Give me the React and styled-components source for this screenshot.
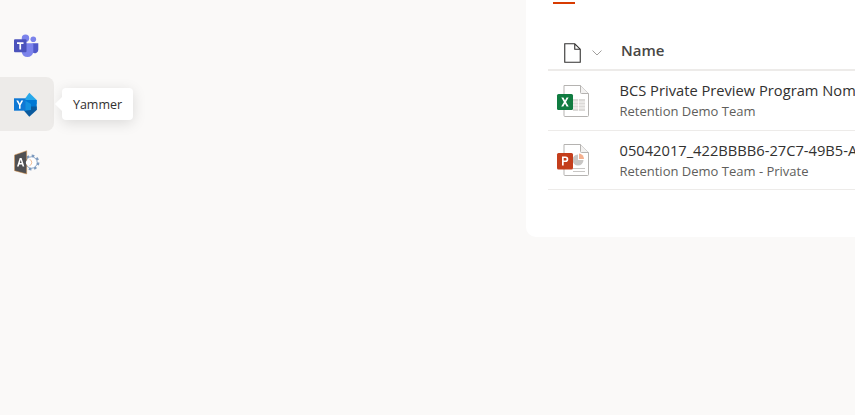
import React from "react";
import styled, { createGlobalStyle } from "styled-components";

const Global = createGlobalStyle`
  html, body { margin: 0; padding: 0; height: 100%; overflow: hidden; background: #faf9f8; }
  #root { height: 100%; }
  * { box-sizing: border-box; }
`;
const Page = styled.div`
  display: flex; width: 855px; height: 415px; overflow: hidden; background: #faf9f8;
  font-family: "Open Sans", "Noto Sans", sans-serif; color: #323130;
`;
const Rail = styled.nav`
  width: 54px; flex: none; display: flex; flex-direction: column; gap: 4px; padding-top: 19px;
`;
const Tile = styled.div`
  position: relative; width: 54px; height: 54px; display: flex; align-items: center; justify-content: center;
  border-radius: ${p => (p.$active ? "0 8px 8px 0" : "0")};
  background: ${p => (p.$active ? "#edebe9" : "transparent")};
`;
const Tooltip = styled.div`
  position: absolute; left: 62px; top: 11px; height: 32px; width: 71px; background: #fff; border-radius: 4px;
  display: flex; align-items: center; justify-content: center; font-size: 12.5px; color: #323130;
  box-shadow: 0 3px 14px rgba(0,0,0,.13);
  &::before {
    content: ""; position: absolute; left: -5px; top: 11px; width: 10px; height: 10px; background: #fff;
    transform: rotate(45deg);
  }
`;
const Card = styled.section`
  margin-left: 472px; width: 329px; height: 237px; flex: none; background: #fff; border-radius: 0 0 0 10px;
  padding: 2px 0 0 22px; overflow: hidden;
`;
const Tab = styled.div`
  width: 22px; height: 2px; margin-left: 5px; background: #d83b01;
`;
const HeaderRow = styled.div`
  display: flex; align-items: center; height: 67px; padding: 32px 0 0 16px; border-bottom: 2px solid #edebe9;
`;
const Caret = styled.svg`
  width: 10px; height: 6px; margin-left: 11px; flex: none;
`;
const HeaderName = styled.div`
  margin: 0 0 6px 19px; font-size: 15px; font-weight: 600; color: #484644; white-space: nowrap;
`;
const Row = styled.div`
  display: flex; align-items: center; height: ${p => p.$h}px; border-bottom: 1px solid #edebe9; padding-left: 8px;
`;
const FileIcon = styled.svg`
  width: 34px; height: 34px; flex: none;
`;
const Text = styled.div`
  margin-left: 29.5px; white-space: nowrap; min-width: 0; display: flex; flex-direction: column; gap: 2px;
`;
const Title = styled.div`
  font-size: 14.7px; line-height: 19px; color: #323130;
`;
const Sub = styled.div`
  font-size: 13px; line-height: 18px; color: #605e5c;
`;

const Teams = () => (
  <svg width="26" height="24" viewBox="0 0 26 24">
    <circle cx="19.300" cy="5.300" r="2.800" fill="#7b83eb"/>
    <circle cx="11.500" cy="4.300" r="3.700" fill="#7b83eb"/>
    <path d="M18.500 9.300h5.800v6.500a3.400 3.400 0 0 1-5.800 2.400z" fill="#5059c9"/>
    <path d="M7.700 9.300h11.600v8.400a5.800 5.800 0 0 1-5.800 5.300 5.900 5.900 0 0 1-5.800-5z" fill="#7b83eb"/>
    <rect x="0" y="5.300" width="12.500" height="13" rx="1" fill="#4b53bc"/>
    <path d="M3 8.300h6.500v1.600H7.100v5.600H5.400V9.900H3z" fill="#fff"/>
  </svg>
);
const Yammer = () => (
  <svg width="26" height="26" viewBox="0 0 26 26">
    <path d="M15.300 1.700 22.700 9 22.700 13H10V9z" fill="#28a8ea"/>
    <path d="M10 9h12.700v10H10z" fill="#0078d4"/>
    <path d="M10 15.500h12.700V19l-7.400 6.700L10 19.700z" fill="#0a5a9e"/>
    <path d="M10 9l7 4v6l-7 .7z" fill="#1490df"/>
    <rect x="0" y="7.300" width="11.500" height="12.400" fill="#0f78d4"/>
    <path d="M2.300 9.500h1.900l1.600 3 1.500-3h1.900L6.600 14.300V17.700H5V14.300z" fill="#fff"/>
  </svg>
);
const Admin = () => (
  <svg width="26" height="26" viewBox="0 0 26 26">
    <circle cx="17.500" cy="13.500" r="6.700" fill="none" stroke="#7f9cc0" strokeWidth="2.400" strokeDasharray="2.600 2.660"/>
    <circle cx="17.500" cy="13.500" r="5.700" fill="#fff" stroke="#6f8fb8" strokeWidth=".8"/>
    <path d="M.5 6 12.700 1.700V25L.5 21.700z" fill="#505052" stroke="#e39b4e" strokeWidth=".5"/>
    <path d="M5.700 9h1.900l2.700 8.500H8.600l-.6-2H5.300l-.6 2H3zM5.800 14h1.800L6.700 10.700z" fill="#fff"/>
    <circle cx="14.500" cy="13.500" r="2.600" fill="#fff"/>
    <path d="M15.500 10.300a3.400 3.400 0 0 1 0 6.400" fill="none" stroke="#e8a268" strokeWidth=".7"/>
  </svg>
);
const BlankDoc = () => (
  <svg width="17" height="20" viewBox="0 0 17 20" style={{ flex: "none" }}>
    <path d="M.75.750h10L16.250 6.200v13.050H.75z M10.750.750V6.200h5.500" fill="none" stroke="#323130" strokeWidth="1.100"/>
  </svg>
);
const Excel = () => (
  <FileIcon viewBox="0 0 34 34">
    <path d="M8 1.500h16.500L32.500 9.500v22a1 1 0 0 1-1 1H9a1 1 0 0 1-1-1z" fill="#fff" stroke="#b5b3b1"/>
    <path d="M24.500 1.500v7a1 1 0 0 0 1 1h7" fill="#f3f2f1" stroke="#b5b3b1"/>
    <path d="M17 15h12v12H17z" fill="#dcdad8"/>
    <path d="M17 18h12M17 21h12M17 24h12M22.500 15v12" stroke="#fff" strokeWidth=".8"/>
    <rect x="1" y="10" width="16" height="16" rx="1.500" fill="#107c41"/>
    <path d="M5.300 13.500h2.100l1.600 3 1.600-3h2l-2.600 4.500 2.700 4.500h-2.100L9 19.400l-1.700 3.100H5.200l2.700-4.500z" fill="#fff"/>
  </FileIcon>
);
const Ppt = () => (
  <FileIcon viewBox="0 0 34 34">
    <path d="M8 1.500h16.500L32.500 9.500v22a1 1 0 0 1-1 1H9a1 1 0 0 1-1-1z" fill="#fff" stroke="#b5b3b1"/>
    <path d="M24.500 1.500v7a1 1 0 0 0 1 1h7" fill="#f3f2f1" stroke="#b5b3b1"/>
    <path d="M22 11.500a5.500 5.500 0 1 0 5.500 5.500H22z" fill="#c8c6c4"/>
    <path d="M23 10.500a5.500 5.500 0 0 1 5 5.500h-5z" fill="#f4b08f"/>
    <path d="M17 25.500h12M17 28.500h12" stroke="#c8c6c4"/>
    <rect x="1" y="10" width="16" height="16.500" rx="1.500" fill="#c43e1c"/>
    <path d="M6 13.500h3.500a2.800 2.800 0 0 1 0 5.600H7.700v3.400H6zM7.700 15v2.600h1.600a1.300 1.300 0 0 0 0-2.600z" fill="#fff"/>
  </FileIcon>
);

export default function App() {
  return (
    <Page>
      <Global />
      <Rail>
        <Tile><Teams /></Tile>
        <Tile $active>
          <Yammer />
          <Tooltip>Yammer</Tooltip>
        </Tile>
        <Tile><Admin /></Tile>
      </Rail>
      <Card>
        <Tab />
        <HeaderRow>
          <BlankDoc />
          <Caret viewBox="0 0 10 6"><path d="M.5.500 5 5l4.500-4.500" fill="none" stroke="#a19f9d" /></Caret>
          <HeaderName>Name</HeaderName>
        </HeaderRow>
        <Row $h={60}>
          <Excel />
          <Text><Title>BCS Private Preview Program Nomination</Title><Sub>Retention Demo Team</Sub></Text>
        </Row>
        <Row $h={59}>
          <Ppt />
          <Text><Title>05042017_422BBBB6-27C7-49B5-A3F1-9D02</Title><Sub>Retention Demo Team - Private</Sub></Text>
        </Row>
      </Card>
    </Page>
  );
}
